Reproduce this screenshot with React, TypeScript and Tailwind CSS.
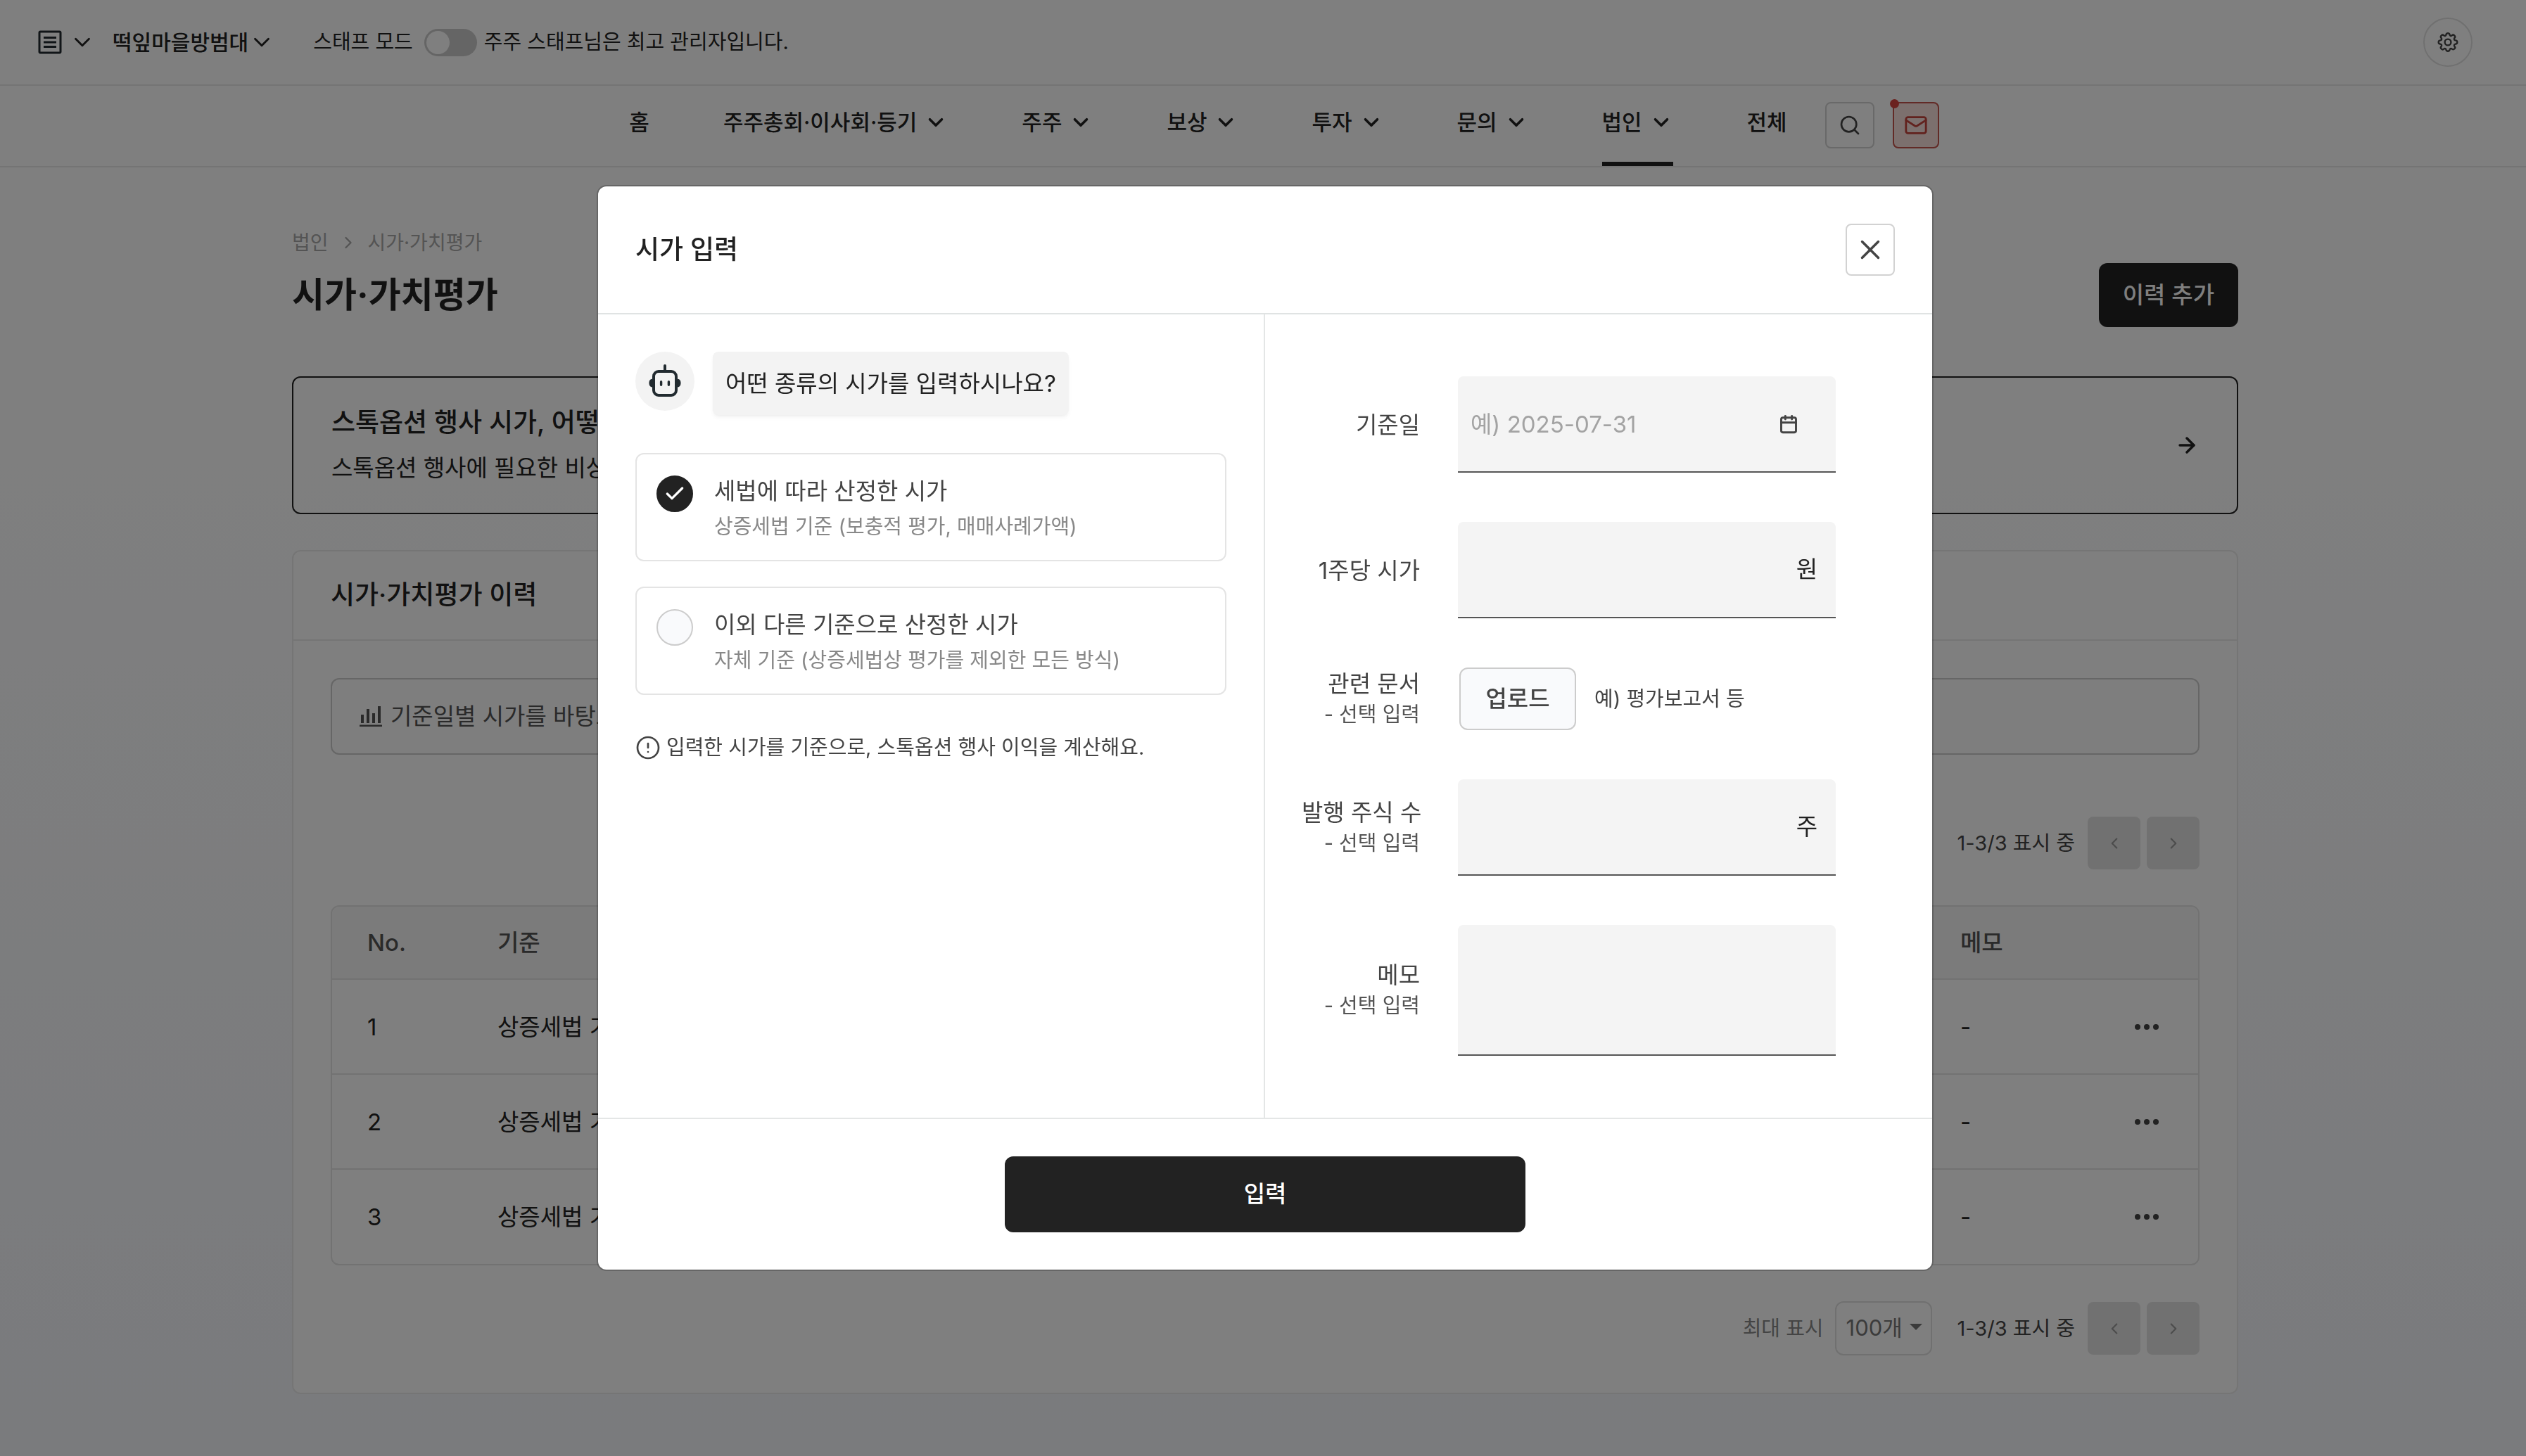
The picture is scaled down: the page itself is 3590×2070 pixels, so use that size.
import React, { useState } from 'react';
import { ChevronDown, ChevronLeft, ChevronRight, ArrowRight, Search, Mail, X, Calendar, Check, CircleAlert } from 'lucide-react';

interface MenuItem {
  label: string;
  hasSub: boolean;
  active?: boolean;
}

const MENU: MenuItem[] = [
  { label: '홈', hasSub: false },
  { label: '주주총회·이사회·등기', hasSub: true },
  { label: '주주', hasSub: true },
  { label: '보상', hasSub: true },
  { label: '투자', hasSub: true },
  { label: '문의', hasSub: true },
  { label: '법인', hasSub: true, active: true },
  { label: '전체', hasSub: false },
];

const ROWS = [
  { no: 1, basis: '상증세법 기준', memo: '-' },
  { no: 2, basis: '상증세법 기준', memo: '-' },
  { no: 3, basis: '상증세법 기준', memo: '-' },
];

const OPTIONS = [
  { id: 'tax', title: '세법에 따라 산정한 시가', desc: '상증세법 기준 (보충적 평가, 매매사례가액)' },
  { id: 'other', title: '이외 다른 기준으로 산정한 시가', desc: '자체 기준 (상증세법상 평가를 제외한 모든 방식)' },
];

const RobotIcon = () => (
  <svg width="52" height="52" viewBox="0 0 26 26" fill="none" stroke="#222b30" strokeWidth="2" strokeLinecap="round">
    <rect x="5" y="6" width="16" height="17" rx="3.5" />
    <path d="M13 2v4" />
    <path d="M10.3 13.4v2.2M15.7 13.4v2.2" strokeWidth="1.7" />
    <path d="M4.5 11.5C2.6 11.5 2 13 2 14.3s.6 2.7 2.5 2.7zM21.5 11.5c1.9 0 2.5 1.5 2.5 2.8S23.4 17 21.5 17z" fill="#222b30" strokeWidth="0.6" />
  </svg>
);

const GearIcon = () => (
  <svg width="32" height="32" viewBox="0 0 32 32" fill="none" stroke="#444" strokeWidth="2.4" strokeLinejoin="round">
    <circle cx="16" cy="16" r="4.4" />
    <path d="M13.5 5.2a2.6 2.6 0 0 1 5 0c.3 1.6 1.8 2.2 3.1 1.3a2.6 2.6 0 0 1 3.7 3.7c-.9 1.3-.3 2.9 1.4 3.2a2.6 2.6 0 0 1 0 5.2c-1.7.3-2.3 1.9-1.4 3.2a2.6 2.6 0 0 1-3.7 3.7c-1.3-.9-2.8-.3-3.1 1.3a2.6 2.6 0 0 1-5 0c-.3-1.6-1.8-2.2-3.1-1.3a2.6 2.6 0 0 1-3.7-3.7c.9-1.3.3-2.9-1.4-3.2a2.6 2.6 0 0 1 0-5.2c1.7-.3 2.3-1.9 1.4-3.2a2.6 2.6 0 0 1 3.7-3.7c1.3.9 2.8.3 3.1-1.3z" />
  </svg>
);

const ListIcon = () => (
  <svg width="34" height="34" viewBox="0 0 34 34" fill="none" stroke="#222b30" strokeWidth="3">
    <rect x="2" y="2" width="30" height="30" rx="1.5" />
    <path d="M8 10.5h18M8 17h18M8 23.5h18" strokeWidth="3.2" />
  </svg>
);

const ChartIcon = () => (
  <svg width="32" height="30" viewBox="0 0 32 30" fill="#555">
    <path d="M2 12h4v12H2zM10 4h4v20h-4zM18 10h4v14h-4zM26 0h4v24h-4zM0 26.5h32V29H0z" />
  </svg>
);

const TopBar = () => (
  <header className="flex items-center h-[122px] pl-[54px] pr-[76px] border-b-2 border-[#e8e8e8] text-[29px] text-[#222]">
    <button aria-label="메뉴 목록" className="flex items-center gap-[10px]">
      <ListIcon />
      <ChevronDown size={38} strokeWidth={1.8} />
    </button>
    <button className="flex items-center ml-6 text-[30px] font-medium">
      떡잎마을방범대
      <ChevronDown size={38} strokeWidth={1.8} />
    </button>
    <label htmlFor="staff" className="ml-[54px]">스태프 모드</label>
    <input
      id="staff"
      type="checkbox"
      role="switch"
      className="appearance-none w-[75px] h-[39px] ml-4 mr-[10px] rounded-full bg-[#cacaca] before:block before:m-[3px] before:size-[33px] before:rounded-full before:bg-white"
    />
    <span>주주 스태프님은 최고 관리자입니다.</span>
    <button aria-label="설정" className="flex items-center justify-center size-[70px] ml-auto rounded-full border-2 border-[#e0e0e0]">
      <GearIcon />
    </button>
  </header>
);

const MainNav = () => (
  <nav className="flex justify-center h-[116px] pl-[60px] border-b-2 border-[#e8e8e8] text-[31px] font-medium text-[#222]">
    <div className="flex gap-[105px]">
      {MENU.map((item) => (
        <a
          key={item.label}
          href="#"
          className={`flex items-center gap-2.5 pb-1 border-b-6 ${item.active ? 'border-[#222]' : 'border-transparent'}`}
        >
          {item.label}
          {item.hasSub && <ChevronDown size={34} strokeWidth={2.5} />}
        </a>
      ))}
    </div>
    <div className="flex items-center gap-[26px] ml-[54px] pb-0.5">
      <button aria-label="검색" className="flex items-center justify-center w-[70px] h-[66px] rounded-lg border-2 border-[#d2d2d2]">
        <Search size={32} strokeWidth={2} color="#444" />
      </button>
      <button aria-label="메시지" className="relative flex items-center justify-center size-[66px] rounded-lg border-2 border-[#c4544c] bg-[#f8e0dd]">
        <Mail size={34} strokeWidth={2} color="#c4443c" />
        <span className="absolute -top-1.5 -left-1.5 size-[13px] rounded-full bg-[#d6453f]" />
      </button>
    </div>
  </nav>
);

const Pager = () => (
  <div className="flex items-center text-[29px] text-[#444]">
    <span>1-3/3 표시 중</span>
    <button disabled aria-label="이전" className="flex items-center justify-center size-[75px] ml-[18px] rounded-lg bg-[#e2e2e2]">
      <ChevronLeft size={26} color="#999" />
    </button>
    <button disabled aria-label="다음" className="flex items-center justify-center size-[75px] ml-[9px] rounded-lg bg-[#e2e2e2]">
      <ChevronRight size={26} color="#999" />
    </button>
  </div>
);

const HistoryTable = () => (
  <div className="rounded-xl border-2 border-[#e4e4e4] overflow-hidden">
    <table className="w-full table-fixed text-left text-[33px] leading-[48px] text-[#222]">
      <thead className="bg-[#f7f7f7] text-[#555]">
        <tr className="h-[103px] border-b-2 border-[#e4e4e4]">
          <th className="w-[185px] pl-[50px] font-medium">No.</th>
          <th className="pl-[50px] font-medium">기준</th>
          <th className="w-[242px] pl-[50px] font-medium">메모</th>
          <th className="w-[146px]"></th>
        </tr>
      </thead>
      <tbody>
        {ROWS.map((row) => (
          <tr key={row.no} className="h-[135px] border-b-2 border-[#e4e4e4] last:border-b-0">
            <td className="pl-[50px]">{row.no}</td>
            <td className="pl-[50px]">{row.basis}</td>
            <td className="pl-[50px]">{row.memo}</td>
            <td className="pl-14">
              <button aria-label="더보기" className="flex gap-[5px]">
                <span className="size-2 rounded-full bg-[#444]" />
                <span className="size-2 rounded-full bg-[#444]" />
                <span className="size-2 rounded-full bg-[#444]" />
              </button>
            </td>
          </tr>
        ))}
      </tbody>
    </table>
  </div>
);

const ValuationPage = () => (
  <main className="w-full max-w-[2766px] mx-auto pt-[87px] text-[#222]">
    <div className="flex items-end justify-between">
      <div className="pb-[10px]">
        <div className="flex items-center gap-3.5 text-[28px] leading-10 text-[#a8a8a8]">
          <a href="#">법인</a>
          <ChevronRight size={28} strokeWidth={2} />
          <a href="#">시가·가치평가</a>
        </div>
        <h1 className="mt-[18px] text-[50px] leading-[72px] font-bold">시가·가치평가</h1>
      </div>
      <button className="h-[91px] px-[34px] rounded-xl bg-[#222] text-white text-[33px] font-medium">이력 추가</button>
    </div>

    <a href="#" className="flex items-center justify-between h-[196px] mt-[70px] px-[54px] rounded-xl border-2 border-[#222]">
      <div>
        <p className="text-[37px] leading-[64px] font-medium">스톡옵션 행사 시가, 어떻게 정하나요?</p>
        <p className="text-[33px] leading-[64px]">스톡옵션 행사에 필요한 비상장 시가</p>
      </div>
      <ArrowRight size={34} strokeWidth={2.5} />
    </a>

    <section className="mt-[51px] rounded-xl border-2 border-[#ebebeb] bg-white">
      <h2 className="h-[127px] px-[53px] border-b-2 border-[#ebebeb] text-[37px] leading-[124px] font-medium">시가·가치평가 이력</h2>
      <div className="p-[53px]">
        <button className="flex items-center gap-3 w-full h-[109px] px-[39px] rounded-xl border-2 border-[#cdcdcd] bg-[#fcfcfc] text-[33px] text-[#555]">
          <ChartIcon />
          기준일별 시가를 바탕으로 그래프를 확인하세요
        </button>
        <div className="flex justify-end mt-[88px] mb-[51px]">
          <Pager />
        </div>
        <HistoryTable />
        <div className="flex items-center justify-end mt-[51px]">
          <label htmlFor="page-size" className="mr-4 text-[29px] text-[#888]">최대 표시</label>
          <div className="relative mr-9">
            <select id="page-size" className="appearance-none w-[138px] h-[77px] pl-3.5 rounded-xl border-2 border-[#e0e0e0] bg-white text-[31px] text-[#777]">
              <option>100개</option>
            </select>
            <span className="absolute right-3.5 top-8 border-x-9 border-t-9 border-x-transparent border-t-[#777] pointer-events-none" />
          </div>
          <Pager />
        </div>
      </div>
    </section>
  </main>
);

interface FieldProps {
  id: string;
  label: string;
  optional?: boolean;
  children: React.ReactNode;
}

const Field = ({ id, label, optional, children }: FieldProps) => (
  <div className="flex items-center gap-[54px]">
    <label htmlFor={id} className="w-[168px] shrink-0 text-right text-[33px] leading-[44px] text-[#444] whitespace-nowrap">
      {label}
      {optional && <span className="block text-[29px] leading-[44px] text-[#555]">- 선택 입력</span>}
    </label>
    <div className="flex flex-1 min-w-0 items-center">{children}</div>
  </div>
);

const fieldBox = 'flex items-center w-full h-[137px] rounded-t-lg border-b-2 border-[#555] bg-[#f4f4f4]';

const PriceDialog = () => {
  const [basis, setBasis] = useState('tax');

  return (
    <div role="dialog" aria-label="시가 입력" className="w-[1896px] max-w-full rounded-xl bg-white ring-2 ring-black/20 text-[#222]">
      {/* Header */}
      <div className="flex items-center justify-between h-[182px] px-[53px] border-b-2 border-[#e0e3e3]">
        <h2 className="text-[37px] font-medium">시가 입력</h2>
        <button aria-label="닫기" className="flex items-center justify-center w-[70px] h-[74px] rounded-lg border-2 border-[#d2d2d2]">
          <X size={46} strokeWidth={1.8} color="#444" />
        </button>
      </div>

      {/* Body */}
      <div className="grid grid-cols-2 border-b-2 border-[#e4e6e6]">
        <div className="p-[53px] border-r-2 border-[#e4e6e6]">
          <div className="flex gap-[26px]">
            <div className="flex items-center justify-center size-[84px] rounded-full bg-[#f3f3f3]">
              <RobotIcon />
            </div>
            <p className="px-[18px] rounded-lg bg-[#f3f3f3] shadow-md shadow-black/5 text-[33px] leading-[90px]">어떤 종류의 시가를 입력하시나요?</p>
          </div>
          <div className="flex flex-col gap-9 mt-[54px]">
            {OPTIONS.map((opt) => (
              <label key={opt.id} className="flex items-start gap-[30px] h-[154px] px-7 pt-[26px] rounded-xl border-2 border-[#e4e4e4]">
                <span className="relative flex items-center justify-center mt-1">
                  <input
                    type="radio"
                    name="basis"
                    checked={basis === opt.id}
                    onChange={() => setBasis(opt.id)}
                    className="appearance-none size-[52px] rounded-full border-2 border-[#ccc] bg-[#f9fafc] checked:border-[#222] checked:bg-[#222]"
                  />
                  {basis === opt.id && <Check size={32} strokeWidth={2.5} color="#fff" className="absolute" />}
                </span>
                <span>
                  <span className="block text-[33px] leading-[52px] text-[#444]">{opt.title}</span>
                  <span className="block text-[29px] leading-[50px] text-[#888]">{opt.desc}</span>
                </span>
              </label>
            ))}
          </div>
          <p className="flex items-center gap-2 mt-[53px] text-[29px] leading-[44px] text-[#444]">
            <CircleAlert size={36} strokeWidth={1.8} />
            입력한 시가를 기준으로, 스톡옵션 행사 이익을 계산해요.
          </p>
        </div>

        <div className="flex flex-col gap-[70px] py-[88px] pl-[52px] pr-[137px]">
          <Field id="date" label="기준일">
            <div className={fieldBox}>
              <input id="date" type="text" placeholder="예) 2025-07-31" className="flex-1 min-w-0 h-full px-[18px] text-[33px] outline-none placeholder:text-[#a3a3a3]" />
              <Calendar size={28} strokeWidth={2.5} color="#444" className="shrink-0 mr-[53px]" />
            </div>
          </Field>
          <Field id="price" label="1주당 시가">
            <div className={fieldBox}>
              <input id="price" type="text" className="flex-1 min-w-0 h-full px-[18px] text-[33px] text-right outline-none" />
              <span className="mr-[26px] text-[33px]">원</span>
            </div>
          </Field>
          <Field id="doc" label="관련 문서" optional>
            <button id="doc" className="w-[166px] h-[89px] ml-0.5 rounded-xl border-2 border-[#ccc] bg-[#f9fafc] text-[33px] font-medium text-[#444]">업로드</button>
            <span className="ml-[26px] text-[29px] text-[#444]">예) 평가보고서 등</span>
          </Field>
          <Field id="shares" label="발행 주식 수" optional>
            <div className={fieldBox}>
              <input id="shares" type="text" className="flex-1 min-w-0 h-full px-[18px] text-[33px] text-right outline-none" />
              <span className="mr-[26px] text-[33px]">주</span>
            </div>
          </Field>
          <Field id="memo" label="메모" optional>
            <textarea id="memo" className="w-full h-[186px] px-[18px] py-3 rounded-t-lg border-b-2 border-[#555] bg-[#f4f4f4] text-[33px] resize-none outline-none" />
          </Field>
        </div>
      </div>

      {/* Footer */}
      <div className="flex justify-center py-[53px]">
        <button className="w-[740px] h-[108px] rounded-xl bg-[#222] text-white text-[33px] font-medium">입력</button>
      </div>
    </div>
  );
};

export default function App() {
  return (
    <div className="h-screen overflow-hidden bg-linear-to-b from-white from-25% to-[#f4f6fb] font-[Inter,'Noto_Sans_CJK_KR',sans-serif]">
      <TopBar />
      <MainNav />
      <div className="pl-1.5">
        <ValuationPage />
      </div>
      <div className="fixed inset-0 flex items-center justify-center pl-1.5 bg-black/50">
        <PriceDialog />
      </div>
    </div>
  );
}
